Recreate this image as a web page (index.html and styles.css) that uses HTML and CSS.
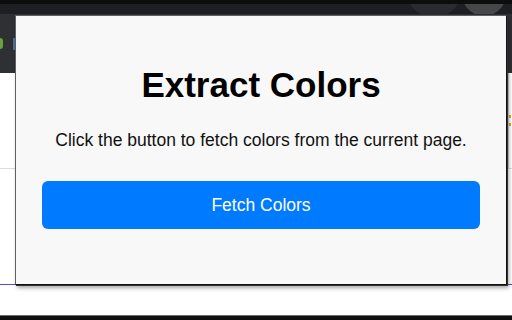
FILE: index.html
```html
<!DOCTYPE html>
<html lang="en">
<head>
<meta charset="utf-8">
<title>Extract Colors</title>
<link rel="stylesheet" href="styles.css">
</head>
<body>
<div class="browser">
  <div class="topstrip"></div>
  <div class="tabbar">
    <span class="tab tab-a"></span>
    <span class="tab tab-b"></span>
  </div>
  <div class="toolbar">
    <span class="ext-green"></span>
    <span class="ext-blue"></span>
  </div>
  <div class="page">
    <div class="page-row page-row-a">
      <span class="right-rule"><i class="dot"></i><i class="dot"></i></span>
    </div>
    <div class="page-row page-row-b"></div>
    <div class="page-row page-row-c"></div>
  </div>
  <div class="bottomstrip"></div>

  <div class="popup">
    <h1 class="title">Extract Colors</h1>
    <p class="desc">Click the button to fetch colors from the current page.</p>
    <button class="fetch" type="button">Fetch Colors</button>
  </div>
</div>
</body>
</html>
```

FILE: styles.css
```css
html, body {
  margin: 0;
  padding: 0;
}
body {
  width: 512px;
  height: 320px;
  overflow: hidden;
  font-family: "Liberation Sans", Arial, sans-serif;
  background: #ffffff;
}
.browser {
  position: relative;
  width: 512px;
  height: 320px;
  display: flex;
  flex-direction: column;
}
.topstrip {
  height: 4px;
  background: #0d0d0e;
}
.tabbar {
  height: 10px;
  background: #1e1f22;
  display: flex;
  justify-content: flex-end;
  overflow: hidden;
}
.tab {
  display: block;
  height: 24px;
  margin-top: -12px;
  border-radius: 0 0 22px 22px;
}
.tab-a {
  width: 52px;
  background: #2a2b2e;
  margin-right: 2px;
}
.tab-b {
  width: 44px;
  background: #464749;
  margin-right: 6px;
}
.toolbar {
  height: 59px;
  background: #2f3033;
  display: flex;
  align-items: center;
  gap: 10px;
}
.ext-green {
  display: block;
  width: 3px;
  height: 11px;
  background: #6aa23a;
  border-radius: 0 3px 3px 0;
}
.ext-blue {
  display: block;
  width: 2px;
  height: 12px;
  background: #4a6f9e;
}
.page {
  flex: 1;
  display: flex;
  flex-direction: column;
  background: #ffffff;
}
.page-row-a {
  height: 95px;
  border-bottom: 1px solid #dcdcdc;
  display: flex;
  justify-content: flex-end;
}
.right-rule {
  display: flex;
  flex-direction: column;
  gap: 5px;
  padding-top: 42px;
  width: 2px;
  margin-right: 1px;
  border-left: 1px solid #d8d8d8;
}
.dot {
  display: block;
  width: 2px;
  height: 3px;
  background: #e0a040;
}
.page-row-b {
  height: 115px;
  border-bottom: 1px solid #4b4cf2;
}
.page-row-c {
  flex: 1;
}
.bottomstrip {
  height: 5px;
  background: #101010;
  border-top: 1px solid #6a6a6a;
  box-sizing: border-box;
}

.popup {
  position: absolute;
  left: 15px;
  top: 15px;
  box-sizing: border-box;
  width: 492px;
  height: 270px;
  background: #f8f8f8;
  border: 1px solid #5d5f61;
  border-right-color: #111111;
  border-bottom-color: #111111;
  box-shadow: 1px 1px 0 #333333, 2px 3px 4px rgba(0, 0, 0, 0.35);
  display: flex;
  flex-direction: column;
  align-items: center;
  padding: 49px 26px 0;
}
.title {
  margin: 0;
  font-size: 35px;
  line-height: 40px;
  font-weight: bold;
  color: #000000;
}
.desc {
  margin: 25px 0 0;
  font-size: 17.5px;
  line-height: 20px;
  color: #111111;
}
.fetch {
  margin-top: 31px;
  width: 438px;
  height: 48px;
  border: none;
  border-radius: 6px;
  background: #007bff;
  color: #ffffff;
  font-family: "Liberation Sans", Arial, sans-serif;
  font-size: 17.5px;
  padding: 0;
}
```
